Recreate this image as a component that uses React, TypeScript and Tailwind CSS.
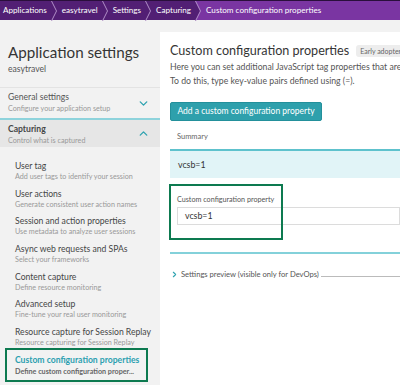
import { ChevronDown, ChevronUp, ChevronRight } from "lucide-react";

const crumbs = ["Applications", "easytravel", "Settings", "Capturing"];

const items = [
  { title: "User tag", sub: "Add user tags to identify your session" },
  { title: "User actions", sub: "Generate consistent user action names" },
  { title: "Session and action properties", sub: "Use metadata to analyze user sessions" },
  { title: "Async web requests and SPAs", sub: "Select your frameworks" },
  { title: "Content capture", sub: "Define resource monitoring" },
  { title: "Advanced setup", sub: "Fine-tune your real user monitoring" },
  { title: "Resource capture for Session Replay", sub: "Resource capturing for Session Replay" },
];

function Sep({ last }: { last?: boolean }) {
  return (
    <svg width="7" height="20" viewBox="0 0 7 20" className="shrink-0">
      {last && <polygon points="0,0 5,10 0,20" fill="#521f74" />}
      <polyline points="0.5,0 5.5,10 0.5,20" fill="none" stroke="#b08fc6" strokeWidth="1" />
    </svg>
  );
}

export default function App() {
  return (
    <div className="w-[400px] h-[385px] overflow-hidden bg-[#f2f2f2] font-['Lato',sans-serif] text-[#454646]">
      {/* Breadcrumb */}
      <nav className="h-5 flex items-center bg-[#521f74] border-t border-[#2a0f3c] text-white text-[8.1px] whitespace-nowrap">
        {crumbs.map((c, i) => (
          <div key={c} className="flex items-center h-full">
            <span className={i === 0 ? "pl-[3px] pr-[4px]" : "pl-[4px] pr-[4px]"}>{c}</span>
            {i < crumbs.length - 1 && <Sep />}
          </div>
        ))}
        <div className="flex items-center h-full flex-1 bg-[#7a35a2]">
          <Sep last />
          <span className="pl-[4px]">Custom configuration properties</span>
        </div>
      </nav>

      <div className="flex h-[365px]">
        {/* Sidebar */}
        <aside className="w-[160px] shrink-0 flex flex-col whitespace-nowrap">
          <div className="h-[68px] shrink-0 pl-2 pt-[23px] border-b border-[#e3e3e3]">
            <h1 className="text-[15.2px] leading-[18px] text-[#353535]">Application settings</h1>
            <p className="text-[8.6px] leading-[12px] mt-[2px] text-[#555]">easytravel</p>
          </div>
          <div className="h-[32px] shrink-0 flex items-center justify-between pl-2 pr-[10px] border-b-2 border-[#8ed3dc]">
            <div>
              <div className="text-[8.6px] leading-[11px] text-[#555]">General settings</div>
              <div className="text-[7.2px] leading-[10px] mt-[1px] text-[#999]">Configure your application setup</div>
            </div>
            <ChevronDown size={13} strokeWidth={2.5} className="text-[#2fa3b0]" />
          </div>
          <div className="h-[27px] shrink-0 flex items-center justify-between pl-2 pr-[10px] bg-[#e6e6e6]">
            <div className="mt-[3px]">
              <div className="text-[8.6px] leading-[11px] font-bold text-[#454646]">Capturing</div>
              <div className="text-[7.2px] leading-[10px] mt-[1px] text-[#999]">Control what is captured</div>
            </div>
            <ChevronUp size={13} strokeWidth={2.5} className="text-[#2fa3b0]" />
          </div>
          <ul className="pt-[13px] flex flex-col gap-[5.7px]">
            {items.map((it) => (
              <li key={it.title} className="pl-[15px]">
                <div className="text-[8.6px] leading-[12px] text-[#454646]">{it.title}</div>
                <div className="text-[7.2px] leading-[10px] text-[#999]">{it.sub}</div>
              </li>
            ))}
          </ul>
          <div className="ml-[5px] w-[143px] h-[34px] border-2 border-[#0d7a50] pl-[8px] pt-[4px]">
            <div className="text-[8.6px] leading-[12px] font-bold text-[#2a9fb0]">Custom configuration properties</div>
            <div className="text-[7.2px] leading-[10px] mt-[1px] font-bold text-[#666]">Define custom configuration proper...</div>
          </div>
        </aside>

        {/* Main panel */}
        <main className="relative mt-3 flex-1 bg-white pl-[10px] overflow-hidden whitespace-nowrap">
          <div className="flex items-center gap-[7px] pt-[10px] h-[28px]">
            <h2 className="text-[12.6px] leading-[18px] text-[#353535]">Custom configuration properties</h2>
            <span className="bg-[#ededed] rounded-[3px] px-[4px] h-[12px] flex items-center text-[7px] text-[#666]">Early adopter</span>
          </div>
          <p className="text-[8.7px] leading-[14px] text-[#555]">
            Here you can set additional JavaScript tag properties that are specific to your application.
            <br />
            To do this, type key-value pairs defined using (=).
          </p>
          <button className="mt-[14px] h-[19px] w-[152px] bg-[#2ea0ac] border border-[#23909b] rounded-[2px] text-white text-[8.5px]">
            Add a custom configuration property
          </button>
          <div className="mt-[11px] pl-[7px] text-[7.5px] leading-[10px] text-[#666]">Summary</div>
          <div className="mt-[7px] h-[29px] border-t-2 border-[#5ec2cd] bg-[#e1f4f7] flex items-center pl-[8px] text-[8.8px] text-[#333]">
            vcsb=1
          </div>
          <div className="pt-[17px] pl-[7px]">
            <div className="text-[7.2px] leading-[10px] text-[#555]">Custom configuration property</div>
            <div className="mt-[2px] h-[18px] border border-[#dcdcdc] flex items-center pl-[7px] text-[8.8px] text-[#333]">
              vcsb=1
            </div>
          </div>
          <div className="mt-[27px] h-[2px] bg-[#83d1da]" />
          <div className="mt-[15px] flex items-center h-[10px]">
            <ChevronRight size={9} strokeWidth={3} className="text-[#2fa3b0] shrink-0" />
            <span className="ml-[2px] text-[7.6px] leading-[10px] text-[#555]">Settings preview (visible only for DevOps)</span>
            <span className="ml-[2px] mt-[5px] flex-1 border-b border-[#bbb]" />
          </div>
          {/* annotation box */}
          <div className="absolute left-[9px] top-[152px] w-[114px] h-[56px] border-2 border-[#0d7a50]" />
        </main>
      </div>
    </div>
  );
}
